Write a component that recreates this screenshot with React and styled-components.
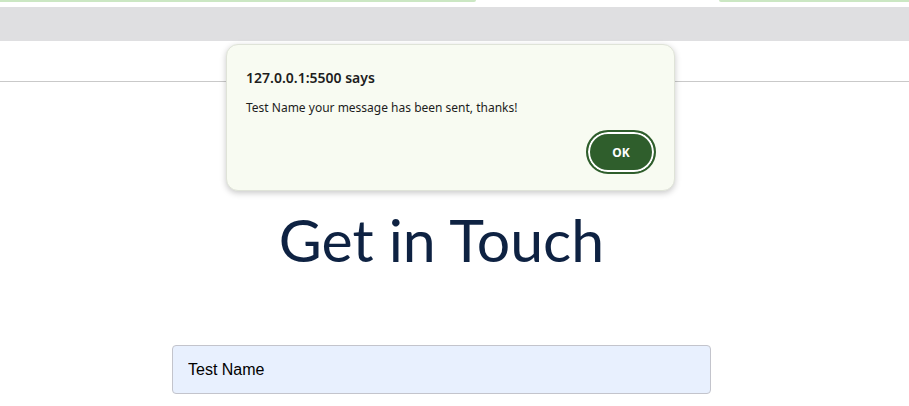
import React from 'react';
import styled, { createGlobalStyle } from 'styled-components';

const GlobalStyle = createGlobalStyle`
  html, body {
    margin: 0;
    padding: 0;
    background: #ffffff;
  }

  body {
    width: 909px;
    height: 406px;
    overflow: hidden;
  }
`;

const Page = styled.div`
  position: relative;
  width: 909px;
  height: 406px;
  overflow: hidden;
  background: #fff;
`;

const TabStrip = styled.div`
  display: flex;
  justify-content: space-between;
  height: 7px;
`;

const TabEdge = styled.div`
  width: ${({ w }) => w}px;
  height: 2px;
  background: #cbe7c3;
  border-radius: ${({ side }) => (side === 'left' ? '0 0 4px 0' : '0 0 0 4px')};
`;

const Toolbar = styled.div`
  height: 34px;
  background: #dfdfe1;
`;

const Header = styled.header`
  height: 40px;
  border-bottom: 1px solid #c9c9c9;
`;

const Main = styled.main`
  display: flex;
  flex-direction: column;
  align-items: center;
  padding: 122px 26px 0 0;
`;

const Heading = styled.h1`
  margin: 0;
  font-family: Lato, 'Open Sans', sans-serif;
  font-weight: 400;
  font-size: 59px;
  line-height: 72px;
  color: #0e2242;
`;

const Form = styled.form`
  margin-top: 69px;
  width: 539px;
`;

const Input = styled.input`
  box-sizing: border-box;
  width: 100%;
  height: 49px;
  padding: 0 15px;
  border: 1px solid #c3c4cc;
  border-radius: 4px;
  background: #e8f0fe;
  font-family: 'Liberation Sans', Arial, sans-serif;
  font-size: 16px;
  color: #000;
  outline: none;
`;

const Dialog = styled.div`
  position: absolute;
  left: 226px;
  top: 44px;
  box-sizing: border-box;
  width: 449px;
  height: 147px;
  padding: 23px 20px 0 19px;
  background: #f8fbf2;
  border: 1px solid #dfe3d8;
  border-radius: 12px;
  box-shadow: 0 2px 6px rgba(0, 0, 0, 0.22);
  display: flex;
  flex-direction: column;
  font-family: 'Noto Sans', 'Open Sans', sans-serif;
`;

const DialogTitle = styled.div`
  font-size: 14px;
  font-weight: 600;
  color: #1d1d1d;
  line-height: 20px;
`;

const DialogText = styled.div`
  margin-top: 12px;
  font-size: 12px;
  color: #1d1d1d;
  line-height: 16px;
`;

const Actions = styled.div`
  display: flex;
  justify-content: flex-end;
  margin-top: 14px;
`;

const OkButton = styled.button`
  box-sizing: border-box;
  width: 70px;
  height: 44px;
  margin-right: -2px;
  border: 2px solid #2f5e2c;
  border-radius: 22px;
  background: #2f5e2c;
  box-shadow: inset 0 0 0 2px #ffffff;
  color: #ffffff;
  font-family: 'Noto Sans', 'Open Sans', sans-serif;
  font-size: 12px;
  font-weight: 700;
  cursor: pointer;
`;

const App = () => (
  <Page>
    <GlobalStyle />
    <TabStrip>
      <TabEdge w={476} side="left" />
      <TabEdge w={190} side="right" />
    </TabStrip>
    <Toolbar />
    <Header />
    <Main>
      <Heading>Get in Touch</Heading>
      <Form>
        <Input defaultValue="Test Name" />
      </Form>
    </Main>
    <Dialog>
      <DialogTitle>127.0.0.1:5500 says</DialogTitle>
      <DialogText>Test Name your message has been sent, thanks!</DialogText>
      <Actions>
        <OkButton type="button">OK</OkButton>
      </Actions>
    </Dialog>
  </Page>
);

export default App;
